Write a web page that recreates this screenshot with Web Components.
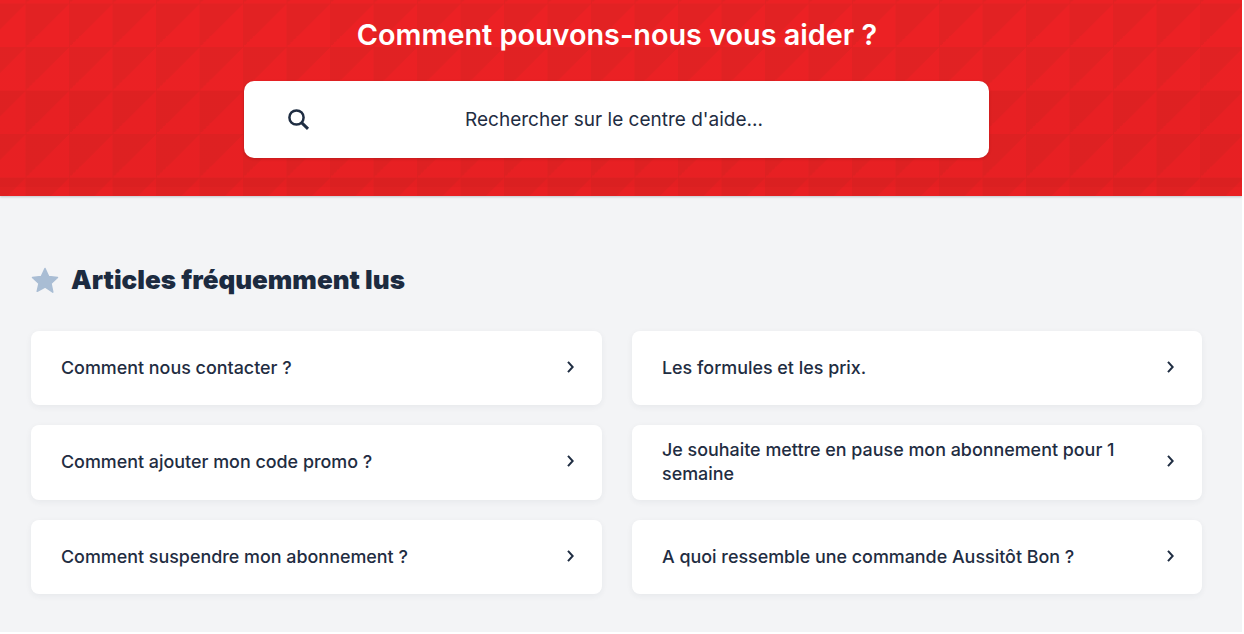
<!doctype html>
<html lang="fr">
<head>
<meta charset="utf-8">
<title>Centre d'aide</title>
<style>
  html { background: #fff; }
  body { margin: 0; width: 1242px; height: 632px; overflow: hidden; background: #f3f4f6; font-family: Inter, "Liberation Sans", sans-serif; color: #1f2d42; }
</style>
</head>
<body>
<help-hero heading="Comment pouvons-nous vous aider ?">
  <help-search placeholder="Rechercher sur le centre d'aide..."></help-search>
</help-hero>
<article-section heading="Articles fréquemment lus">
  <article-card>Comment nous contacter ?</article-card>
  <article-card>Les formules et les prix.</article-card>
  <article-card>Comment ajouter mon code promo ?</article-card>
  <article-card>Je souhaite mettre en pause mon abonnement pour 1 semaine</article-card>
  <article-card>Comment suspendre mon abonnement ?</article-card>
  <article-card>A quoi ressemble une commande Aussitôt Bon ?</article-card>
</article-section>
<script>
function define(name, html, attrs) {
  const template = document.createElement("template");
  template.innerHTML = html;
  customElements.define(name, class extends HTMLElement {
    constructor() {
      super();
      const shadow = this.attachShadow({ mode: "open" });
      shadow.appendChild(template.content.cloneNode(true));
      for (const attr of attrs || []) {
        const target = shadow.querySelector("[data-" + attr + "]");
        if (target) target.textContent = this.getAttribute(attr) || "";
      }
    }
  });
}

define("help-hero", `
<style>
  :host {
    display: block; box-sizing: border-box; height: 196px; padding-top: 14px;
    box-shadow: 0 1px 2px rgba(30,40,60,.22);
    position: relative;
    background-color: #ec2124;
    background-image:
      linear-gradient(to bottom, transparent 0 47px, rgba(120,0,0,.01) 47px 91px, rgba(120,0,0,.035) 91px 134px, rgba(120,0,0,.04) 134px 178px, rgba(120,0,0,.07) 178px 187px, rgba(120,0,0,.03) 187px),
      linear-gradient(135deg, #e22223 50%, transparent 50%);
    background-size: 100% 100%, 43.5px 43.5px;
    background-position: 0 0, 25.5px 3.5px;
  }
  h1 { margin: 0 0 25px; padding-right: 8px; text-align: center; color: #fff; font: 600 28.8px/42px Inter, "Liberation Sans", sans-serif; }
</style>
<h1 data-heading></h1>
<slot></slot>`, ["heading"]);

define("help-search", `
<style>
  :host {
    display: flex; align-items: center; box-sizing: border-box;
    width: 745px; height: 77px; margin-left: 244px; position: relative;
    background: #fff; border-radius: 10px; box-shadow: 0 1px 3px rgba(60,0,0,.2);
  }
  svg { position: absolute; left: 42px; top: 26px; }
  span { flex: 1; text-align: center; padding-right: 5px; font: 400 19px/24px Inter, "Liberation Sans", sans-serif; color: #1f2d42; }
</style>
<svg width="26" height="26" viewBox="0 0 26 26" fill="none" stroke="#1f2d42" stroke-width="2.5"><circle cx="10.5" cy="10.5" r="7.100"/><path d="M15.800 15.800l6.200 6" stroke-width="3"/></svg>
<span data-placeholder></span>`, ["placeholder"]);

define("article-section", `
<style>
  :host { display: block; padding: 70px 40px 0 31px; }
  header { display: flex; align-items: center; gap: 12px; height: 28px; margin-bottom: 36.700px; }
  h2 { margin: 0; font: 900 26px/28px Inter, "Liberation Sans", sans-serif; color: #1c2b40; }
  .grid { display: grid; grid-template-columns: 571px 570px; column-gap: 30px; row-gap: 20px; }
</style>
<header>
  <svg width="28" height="27" viewBox="0 0 28 27"><path d="M14 1.500l3.700 8 8.800 1-6.500 6 1.800 8.700L14 20l-7.800 4.300L8 16.500l-6.500-6 8.800-1z" fill="#a9bdd4" stroke="#a9bdd4" stroke-width="1.500" stroke-linejoin="round"/></svg>
  <h2 data-heading></h2>
</header>
<div class="grid"><slot></slot></div>`, ["heading"]);

define("article-card", `
<style>
  :host {
    display: flex; align-items: center; justify-content: space-between; gap: 40px; box-sizing: border-box;
    height: 74.500px; padding: 0 28px 0 30px;
    background: #fff; border-radius: 8px; box-shadow: 0 2px 6px rgba(40,50,70,.06);
    font: 500 17.900px/24px Inter, "Liberation Sans", sans-serif; color: #1f2d42;
  }
  svg { flex: none; margin-bottom: 2px; }
</style>
<span><slot></slot></span>
<svg width="7" height="12" viewBox="0 0 7 12" fill="none" stroke="#1f2d42" stroke-width="2"><path d="M1 .8L5.700 6 1 11.200"/></svg>`);
</script>
</body>
</html>
